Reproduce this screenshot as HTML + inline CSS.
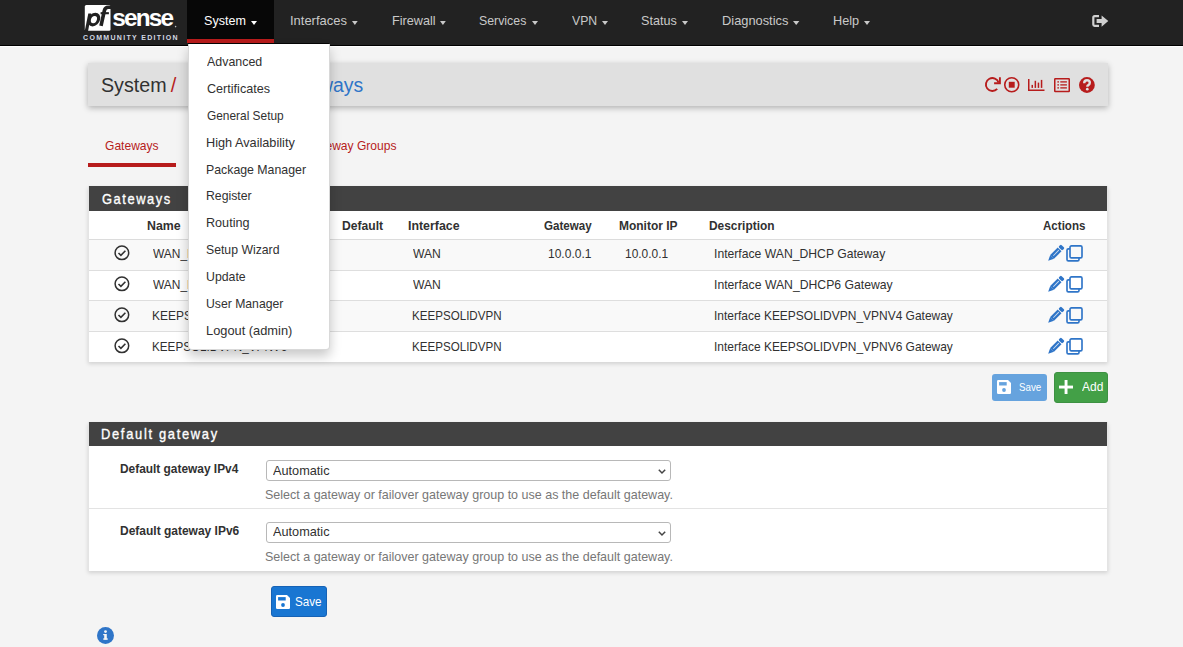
<!DOCTYPE html>
<html><head><meta charset="utf-8"><title>pfSense - System: Routing: Gateways</title>
<style>
html,body{margin:0;padding:0}
body{width:1183px;height:647px;overflow:hidden;position:relative;background:#f4f4f4;font-family:'Liberation Sans', sans-serif}
.t{position:absolute;white-space:pre;font-family:'Liberation Sans', sans-serif;transform-origin:0 0}
svg text{font-family:'Liberation Sans', sans-serif}
</style></head><body>
<div style="position:absolute;left:0px;top:0px;width:1183px;height:45px;background:#222222"></div>
<div style="position:absolute;left:0px;top:45px;width:1183px;height:1px;background:#000000"></div>
<div style="position:absolute;left:0px;top:46px;width:1183px;height:1px;background:#ffffff"></div>
<div style="position:absolute;left:187px;top:0px;width:87px;height:43px;background:#070707"></div>
<div style="position:absolute;left:188px;top:43px;width:141px;height:1px;background:#050505"></div>
<div style="position:absolute;left:187px;top:39px;width:87px;height:4px;background:#b71c1c"></div>
<div class="t" style="left:203.53px;top:13.70px;font-size:13px;line-height:13px;font-weight:400;letter-spacing:0.000px;color:#ffffff;transform:scaleX(0.9667)">System</div>
<div class="t" style="left:289.70px;top:13.70px;font-size:13px;line-height:13px;font-weight:400;letter-spacing:0.000px;color:#c9c9c9;transform:scaleX(0.9964)">Interfaces</div>
<div class="t" style="left:391.53px;top:13.70px;font-size:13px;line-height:13px;font-weight:400;letter-spacing:0.000px;color:#c9c9c9;transform:scaleX(0.9744)">Firewall</div>
<div class="t" style="left:479.05px;top:13.70px;font-size:13px;line-height:13px;font-weight:400;letter-spacing:0.000px;color:#c9c9c9;transform:scaleX(0.9490)">Services</div>
<div class="t" style="left:572.00px;top:13.70px;font-size:13px;line-height:13px;font-weight:400;letter-spacing:0.000px;color:#c9c9c9;transform:scaleX(0.9423)">VPN</div>
<div class="t" style="left:640.63px;top:13.70px;font-size:13px;line-height:13px;font-weight:400;letter-spacing:0.000px;color:#c9c9c9;transform:scaleX(0.9694)">Status</div>
<div class="t" style="left:721.81px;top:13.70px;font-size:13px;line-height:13px;font-weight:400;letter-spacing:0.000px;color:#c9c9c9;transform:scaleX(0.9879)">Diagnostics</div>
<div class="t" style="left:832.62px;top:13.70px;font-size:13px;line-height:13px;font-weight:400;letter-spacing:0.000px;color:#c9c9c9;transform:scaleX(0.9769)">Help</div>
<svg style="position:absolute;left:251px;top:20.5px;overflow:visible" width="6" height="4" viewBox="0 0 6 4"><polygon points="0,0 6,0 3.0,4" fill="#ffffff"/></svg>
<svg style="position:absolute;left:352.3px;top:20.5px;overflow:visible" width="5.699999999999989" height="4" viewBox="0 0 5.699999999999989 4"><polygon points="0,0 5.699999999999989,0 2.8499999999999943,4" fill="#c9c9c9"/></svg>
<svg style="position:absolute;left:440.2px;top:20.5px;overflow:visible" width="5.800000000000011" height="4" viewBox="0 0 5.800000000000011 4"><polygon points="0,0 5.800000000000011,0 2.9000000000000057,4" fill="#c9c9c9"/></svg>
<svg style="position:absolute;left:532px;top:20.5px;overflow:visible" width="6" height="4" viewBox="0 0 6 4"><polygon points="0,0 6,0 3.0,4" fill="#c9c9c9"/></svg>
<svg style="position:absolute;left:602px;top:20.5px;overflow:visible" width="6" height="4" viewBox="0 0 6 4"><polygon points="0,0 6,0 3.0,4" fill="#c9c9c9"/></svg>
<svg style="position:absolute;left:682px;top:20.5px;overflow:visible" width="6" height="4" viewBox="0 0 6 4"><polygon points="0,0 6,0 3.0,4" fill="#c9c9c9"/></svg>
<svg style="position:absolute;left:792.6px;top:20.5px;overflow:visible" width="6.399999999999977" height="4" viewBox="0 0 6.399999999999977 4"><polygon points="0,0 6.399999999999977,0 3.1999999999999886,4" fill="#c9c9c9"/></svg>
<svg style="position:absolute;left:864px;top:20.5px;overflow:visible" width="6" height="4" viewBox="0 0 6 4"><polygon points="0,0 6,0 3.0,4" fill="#c9c9c9"/></svg>
<svg style="position:absolute;left:80px;top:0px;overflow:visible" width="100" height="45" viewBox="0 0 100 45">
<path d="M6.3,5.1 H29 Q30.5,5.1 30.5,6.6 V29.3 Q30.5,30.8 29,30.8 H6.3 Q4.8,30.8 4.8,29.3 V6.6 Q4.8,5.1 6.3,5.1 Z" fill="#ffffff"/>
<ellipse cx="13.9" cy="19.6" rx="4.6" ry="5.2" transform="skewX(-12) translate(4.2 0)" fill="none" stroke="#212121" stroke-width="3.2"/>
<polygon points="8.3,13.6 11.3,13.6 8.0,31.2 4.7,31.2" fill="#212121"/>
<path d="M21.0,25.9 L24.4,10.5 Q25.2,7.3 28.2,7.3 L31,7.3" fill="none" stroke="#212121" stroke-width="3.6"/>
<path d="M20.6,13.2 H28.9" fill="none" stroke="#212121" stroke-width="2.1"/>
<text x="32.3" y="26.1" font-family="Liberation Sans" font-weight="700" font-size="24.4" letter-spacing="-1.85" fill="#ffffff">sense</text>
<circle cx="95.6" cy="26.6" r="0.8" fill="#bbbbbb"/>
<text x="3" y="40.1" font-family="Liberation Sans" font-weight="700" font-size="7" letter-spacing="1.32" fill="#d3d9e4">COMMUNITY EDITION</text>
</svg>
<svg style="position:absolute;left:1092px;top:14.8px;overflow:visible" width="17" height="12" viewBox="0 0 17 12"><path d="M7,1.2 H2.6 Q1.3,1.2 1.3,2.5 V9.6 Q1.3,10.9 2.6,10.9 H7" fill="none" stroke="#d0d0d0" stroke-width="2.2"/>
<path d="M4.6,4.1 H9.6 V0.4 L16.3,6.05 L9.6,11.7 V8 H4.6 Z" fill="#d0d0d0"/></svg>
<div style="position:absolute;left:88px;top:63px;width:1020px;height:43px;background:#e0e0e0;box-shadow:0 2px 6px rgba(0,0,0,.28)"></div>
<div class="t" style="left:100.52px;top:74.70px;font-size:20px;line-height:20px;font-weight:400;letter-spacing:0.000px;color:#313131;transform:scaleX(0.9831)">System</div>
<div class="t" style="left:170.80px;top:74.70px;font-size:20px;line-height:20px;font-weight:400;letter-spacing:1.000px;color:#b71c1c;transform:scaleX(1.0000)">/</div>
<div class="t" style="left:277.03px;top:74.70px;font-size:20px;line-height:20px;font-weight:400;letter-spacing:0.000px;color:#2f75c8;transform:scaleX(0.9693)">Gateways</div>
<svg style="position:absolute;left:984px;top:76.2px;overflow:visible" width="17" height="17" viewBox="0 0 17 17"><path d="M13.2,12.9 A6.5,6.5 0 1 1 14.6,6.6" fill="none" stroke="#b71c1c" stroke-width="1.9"/>
<polyline points="10.1,7.3 15.9,7.3 15.9,1.3" fill="none" stroke="#b71c1c" stroke-width="1.9"/></svg>
<svg style="position:absolute;left:1004px;top:77px;overflow:visible" width="15.7" height="15.5" viewBox="0 0 15.7 15.5"><circle cx="7.75" cy="7.75" r="7.0" fill="none" stroke="#b71c1c" stroke-width="1.6"/>
<rect x="4.8" y="4.8" width="5.9" height="5.9" fill="#b71c1c"/></svg>
<svg style="position:absolute;left:1028.3px;top:79.1px;overflow:visible" width="16.5" height="12" viewBox="0 0 16.5 12"><path d="M0.75,0 V11.25 H16.5" fill="none" stroke="#b71c1c" stroke-width="1.5"/>
<rect x="3.5" y="5.9" width="1.5" height="3.0" fill="#b71c1c"/>
<rect x="6.6" y="1.8" width="1.5" height="7.1" fill="#b71c1c"/>
<rect x="9.7" y="3.6" width="1.5" height="5.3" fill="#b71c1c"/>
<rect x="12.8" y="0.9" width="1.5" height="8.0" fill="#b71c1c"/></svg>
<svg style="position:absolute;left:1053.8px;top:78.2px;overflow:visible" width="16" height="14.2" viewBox="0 0 16 14.2"><rect x="0.75" y="0.75" width="14.5" height="12.7" rx="0.5" fill="none" stroke="#b71c1c" stroke-width="1.5"/>
<rect x="3.4" y="3.2" width="1.5" height="1.4" fill="#b71c1c"/><rect x="6.3" y="3.25" width="6.6" height="1.3" fill="#b71c1c"/>
<rect x="3.4" y="6.2" width="1.5" height="1.4" fill="#b71c1c"/><rect x="6.3" y="6.25" width="6.6" height="1.3" fill="#b71c1c"/>
<rect x="3.4" y="9.2" width="1.5" height="1.4" fill="#b71c1c"/><rect x="6.3" y="9.25" width="6.6" height="1.3" fill="#b71c1c"/></svg>
<svg style="position:absolute;left:1079px;top:77px;overflow:visible" width="16" height="16" viewBox="0 0 16 16"><circle cx="7.9" cy="8" r="7.9" fill="#b71c1c"/>
<path d="M5.2,6.3 Q5.2,3.3 8,3.3 Q10.8,3.3 10.8,5.8 Q10.8,7.3 9.3,8.1 Q8.3,8.6 8.3,9.7" fill="none" stroke="#e0e0e0" stroke-width="2.4"/>
<circle cx="8.3" cy="12.2" r="1.35" fill="#e0e0e0"/></svg>
<div class="t" style="left:104.80px;top:138.70px;font-size:13px;line-height:13px;font-weight:400;letter-spacing:0.000px;color:#b71c1c;transform:scaleX(0.9276)">Gateways</div>
<div class="t" style="left:306.00px;top:138.90px;font-size:13px;line-height:13px;font-weight:400;letter-spacing:0.000px;color:#b71c1c;transform:scaleX(0.9278)">Gateway Groups</div>
<div style="position:absolute;left:88px;top:163px;width:88px;height:4px;background:#b71c1c"></div>
<div style="position:absolute;left:88px;top:186px;width:1020px;height:176px;box-sizing:border-box;background:#fff;border-left:1px solid #e4e4e4;border-right:1px solid #e4e4e4;box-shadow:0 2px 4px rgba(0,0,0,.14)"></div>
<div style="position:absolute;left:89px;top:186px;width:1018px;height:25px;background:#424242"></div>
<div class="t" style="left:102.20px;top:190.60px;font-size:15px;line-height:15px;font-weight:400;letter-spacing:1.807px;color:#ffffff;transform:scaleX(0.8600);-webkit-text-stroke:0.35px #fff">Gateways</div>
<div style="position:absolute;left:89px;top:239px;width:1018px;height:1px;background:#dcdcdc"></div>
<div style="position:absolute;left:89px;top:240px;width:1018px;height:30px;background:#f9f9f9"></div>
<div style="position:absolute;left:89px;top:301px;width:1018px;height:30px;background:#f9f9f9"></div>
<div style="position:absolute;left:89px;top:270px;width:1018px;height:1px;background:#dedede"></div>
<div style="position:absolute;left:89px;top:300px;width:1018px;height:1px;background:#dedede"></div>
<div style="position:absolute;left:89px;top:331px;width:1018px;height:1px;background:#dedede"></div>
<div class="t" style="left:147.15px;top:218.80px;font-size:13px;line-height:13px;font-weight:700;letter-spacing:0.000px;color:#313131;transform:scaleX(0.9500)">Name</div>
<div class="t" style="left:342.27px;top:218.80px;font-size:13px;line-height:13px;font-weight:700;letter-spacing:0.000px;color:#313131;transform:scaleX(0.9326)">Default</div>
<div class="t" style="left:407.95px;top:218.80px;font-size:13px;line-height:13px;font-weight:700;letter-spacing:0.000px;color:#313131;transform:scaleX(0.9509)">Interface</div>
<div class="t" style="left:543.70px;top:218.80px;font-size:13px;line-height:13px;font-weight:700;letter-spacing:0.000px;color:#313131;transform:scaleX(0.8907)">Gateway</div>
<div class="t" style="left:619.08px;top:218.80px;font-size:13px;line-height:13px;font-weight:700;letter-spacing:0.000px;color:#313131;transform:scaleX(0.9206)">Monitor IP</div>
<div class="t" style="left:708.98px;top:218.80px;font-size:13px;line-height:13px;font-weight:700;letter-spacing:0.000px;color:#313131;transform:scaleX(0.9157)">Description</div>
<div class="t" style="left:1043.00px;top:218.80px;font-size:13px;line-height:13px;font-weight:700;letter-spacing:0.000px;color:#313131;transform:scaleX(0.8896)">Actions</div>
<svg style="position:absolute;left:114.3px;top:245.1px;overflow:visible" width="16" height="16" viewBox="0 0 16 16"><circle cx="7.9" cy="7.8" r="6.8" fill="none" stroke="#313131" stroke-width="1.5"/>
<polyline points="4.5,8.0 6.9,10.3 11.4,5.7" fill="none" stroke="#313131" stroke-width="1.6"/></svg>
<svg style="position:absolute;left:1046.6px;top:246.2px;overflow:visible" width="16" height="16" viewBox="0 0 16 16"><g transform="rotate(45 8 8)"><rect x="5.3" y="-3.0" width="5.4" height="3.6" rx="1.2" fill="#2f75c8"/>
<rect x="5.3" y="1.5" width="5.4" height="10.6" fill="#2f75c8"/><polygon points="5.3,12.1 10.7,12.1 8,17.6" fill="#2f75c8"/>
<rect x="7.55" y="2.6" width="0.9" height="7.8" fill="#f9f9f9" opacity=".8"/></g></svg>
<svg style="position:absolute;left:1066.2px;top:245.1px;overflow:visible" width="17" height="17" viewBox="0 0 17 17"><rect x="1.0" y="3.8" width="12.0" height="12.0" rx="1.4" fill="none" stroke="#2f75c8" stroke-width="1.65"/>
<rect x="4.0" y="0.8" width="12.0" height="12.0" rx="1.4" fill="#f9f9f9" stroke="#2f75c8" stroke-width="1.65"/></svg>
<svg style="position:absolute;left:114.3px;top:276.1px;overflow:visible" width="16" height="16" viewBox="0 0 16 16"><circle cx="7.9" cy="7.8" r="6.8" fill="none" stroke="#313131" stroke-width="1.5"/>
<polyline points="4.5,8.0 6.9,10.3 11.4,5.7" fill="none" stroke="#313131" stroke-width="1.6"/></svg>
<svg style="position:absolute;left:1046.6px;top:277.20000000000005px;overflow:visible" width="16" height="16" viewBox="0 0 16 16"><g transform="rotate(45 8 8)"><rect x="5.3" y="-3.0" width="5.4" height="3.6" rx="1.2" fill="#2f75c8"/>
<rect x="5.3" y="1.5" width="5.4" height="10.6" fill="#2f75c8"/><polygon points="5.3,12.1 10.7,12.1 8,17.6" fill="#2f75c8"/>
<rect x="7.55" y="2.6" width="0.9" height="7.8" fill="#ffffff" opacity=".8"/></g></svg>
<svg style="position:absolute;left:1066.2px;top:276.1px;overflow:visible" width="17" height="17" viewBox="0 0 17 17"><rect x="1.0" y="3.8" width="12.0" height="12.0" rx="1.4" fill="none" stroke="#2f75c8" stroke-width="1.65"/>
<rect x="4.0" y="0.8" width="12.0" height="12.0" rx="1.4" fill="#ffffff" stroke="#2f75c8" stroke-width="1.65"/></svg>
<svg style="position:absolute;left:114.3px;top:307.2px;overflow:visible" width="16" height="16" viewBox="0 0 16 16"><circle cx="7.9" cy="7.8" r="6.8" fill="none" stroke="#313131" stroke-width="1.5"/>
<polyline points="4.5,8.0 6.9,10.3 11.4,5.7" fill="none" stroke="#313131" stroke-width="1.6"/></svg>
<svg style="position:absolute;left:1046.6px;top:308.3px;overflow:visible" width="16" height="16" viewBox="0 0 16 16"><g transform="rotate(45 8 8)"><rect x="5.3" y="-3.0" width="5.4" height="3.6" rx="1.2" fill="#2f75c8"/>
<rect x="5.3" y="1.5" width="5.4" height="10.6" fill="#2f75c8"/><polygon points="5.3,12.1 10.7,12.1 8,17.6" fill="#2f75c8"/>
<rect x="7.55" y="2.6" width="0.9" height="7.8" fill="#f9f9f9" opacity=".8"/></g></svg>
<svg style="position:absolute;left:1066.2px;top:307.2px;overflow:visible" width="17" height="17" viewBox="0 0 17 17"><rect x="1.0" y="3.8" width="12.0" height="12.0" rx="1.4" fill="none" stroke="#2f75c8" stroke-width="1.65"/>
<rect x="4.0" y="0.8" width="12.0" height="12.0" rx="1.4" fill="#f9f9f9" stroke="#2f75c8" stroke-width="1.65"/></svg>
<svg style="position:absolute;left:114.3px;top:338.1px;overflow:visible" width="16" height="16" viewBox="0 0 16 16"><circle cx="7.9" cy="7.8" r="6.8" fill="none" stroke="#313131" stroke-width="1.5"/>
<polyline points="4.5,8.0 6.9,10.3 11.4,5.7" fill="none" stroke="#313131" stroke-width="1.6"/></svg>
<svg style="position:absolute;left:1046.6px;top:339.20000000000005px;overflow:visible" width="16" height="16" viewBox="0 0 16 16"><g transform="rotate(45 8 8)"><rect x="5.3" y="-3.0" width="5.4" height="3.6" rx="1.2" fill="#2f75c8"/>
<rect x="5.3" y="1.5" width="5.4" height="10.6" fill="#2f75c8"/><polygon points="5.3,12.1 10.7,12.1 8,17.6" fill="#2f75c8"/>
<rect x="7.55" y="2.6" width="0.9" height="7.8" fill="#ffffff" opacity=".8"/></g></svg>
<svg style="position:absolute;left:1066.2px;top:338.1px;overflow:visible" width="17" height="17" viewBox="0 0 17 17"><rect x="1.0" y="3.8" width="12.0" height="12.0" rx="1.4" fill="none" stroke="#2f75c8" stroke-width="1.65"/>
<rect x="4.0" y="0.8" width="12.0" height="12.0" rx="1.4" fill="#ffffff" stroke="#2f75c8" stroke-width="1.65"/></svg>
<div class="t" style="left:153.00px;top:247.00px;font-size:13px;line-height:13px;font-weight:400;letter-spacing:0.000px;color:#313131;transform:scaleX(0.9200)">WAN_DHCP</div>
<div class="t" style="left:413.20px;top:247.00px;font-size:13px;line-height:13px;font-weight:400;letter-spacing:0.000px;color:#313131;transform:scaleX(0.9345)">WAN</div>
<div class="t" style="left:548.08px;top:247.00px;font-size:13px;line-height:13px;font-weight:400;letter-spacing:0.000px;color:#313131;transform:scaleX(0.9239)">10.0.0.1</div>
<div class="t" style="left:624.68px;top:247.00px;font-size:13px;line-height:13px;font-weight:400;letter-spacing:0.000px;color:#313131;transform:scaleX(0.9174)">10.0.0.1</div>
<div class="t" style="left:713.56px;top:247.00px;font-size:13px;line-height:13px;font-weight:400;letter-spacing:0.000px;color:#313131;transform:scaleX(0.9368)">Interface WAN_DHCP Gateway</div>
<div class="t" style="left:153.00px;top:278.00px;font-size:13px;line-height:13px;font-weight:400;letter-spacing:0.000px;color:#313131;transform:scaleX(0.9200)">WAN_DHCP6</div>
<div class="t" style="left:413.20px;top:278.00px;font-size:13px;line-height:13px;font-weight:400;letter-spacing:0.000px;color:#313131;transform:scaleX(0.9345)">WAN</div>
<div class="t" style="left:713.56px;top:278.00px;font-size:13px;line-height:13px;font-weight:400;letter-spacing:0.000px;color:#313131;transform:scaleX(0.9392)">Interface WAN_DHCP6 Gateway</div>
<div class="t" style="left:152.08px;top:309.00px;font-size:13px;line-height:13px;font-weight:400;letter-spacing:0.000px;color:#313131;transform:scaleX(0.9200)">KEEPSOLIDVPN_VPNV4</div>
<div class="t" style="left:412.31px;top:309.00px;font-size:13px;line-height:13px;font-weight:400;letter-spacing:0.000px;color:#313131;transform:scaleX(0.8919)">KEEPSOLIDVPN</div>
<div class="t" style="left:713.58px;top:309.00px;font-size:13px;line-height:13px;font-weight:400;letter-spacing:0.000px;color:#313131;transform:scaleX(0.9208)">Interface KEEPSOLIDVPN_VPNV4 Gateway</div>
<div class="t" style="left:152.10px;top:340.00px;font-size:13px;line-height:13px;font-weight:400;letter-spacing:0.000px;color:#313131;transform:scaleX(0.8993)">KEEPSOLIDVPN_VPNV6</div>
<div class="t" style="left:412.31px;top:340.00px;font-size:13px;line-height:13px;font-weight:400;letter-spacing:0.000px;color:#313131;transform:scaleX(0.8919)">KEEPSOLIDVPN</div>
<div class="t" style="left:713.58px;top:340.00px;font-size:13px;line-height:13px;font-weight:400;letter-spacing:0.000px;color:#313131;transform:scaleX(0.9208)">Interface KEEPSOLIDVPN_VPNV6 Gateway</div>
<div style="position:absolute;left:992px;top:374px;width:55px;height:27px;background:#66a3de;border-radius:3px"></div>
<svg style="position:absolute;left:996.8px;top:380px;overflow:visible" width="14" height="14" viewBox="0 0 14 14"><path d="M1.2,0 H11 L14,3 V12.8 Q14,14 12.8,14 H1.2 Q0,14 0,12.8 V1.2 Q0,0 1.2,0 Z" fill="#ffffff"/>
<rect x="2.1" y="2.1" width="7.6" height="3.4" fill="#66a3de"/><circle cx="7" cy="10" r="1.9" fill="#66a3de"/></svg>
<div class="t" style="left:1019.40px;top:381.70px;font-size:11px;line-height:11px;font-weight:400;letter-spacing:0.000px;color:#ffffff;transform:scaleX(0.8880)">Save</div>
<div style="position:absolute;left:1054px;top:372px;width:54px;height:31px;box-sizing:border-box;background:#43a047;border:1px solid #3d9142;border-radius:3px"></div>
<svg style="position:absolute;left:1058.8px;top:379.9px;overflow:visible" width="14" height="14" viewBox="0 0 14 14"><rect x="5.6" y="0" width="2.9" height="14" fill="#fff"/><rect x="0" y="5.6" width="14" height="2.9" fill="#fff"/></svg>
<div class="t" style="left:1082.00px;top:379.70px;font-size:13px;line-height:13px;font-weight:400;letter-spacing:0.000px;color:#ffffff;transform:scaleX(0.9217)">Add</div>
<div style="position:absolute;left:88px;top:422px;width:1020px;height:149px;box-sizing:border-box;background:#fff;border-left:1px solid #e4e4e4;border-right:1px solid #e4e4e4;box-shadow:0 2px 4px rgba(0,0,0,.14)"></div>
<div style="position:absolute;left:89px;top:422px;width:1018px;height:24px;background:#424242"></div>
<div class="t" style="left:101.24px;top:425.90px;font-size:15px;line-height:15px;font-weight:400;letter-spacing:1.967px;color:#ffffff;transform:scaleX(0.8600);-webkit-text-stroke:0.35px #fff">Default gateway</div>
<div style="position:absolute;left:89px;top:508px;width:1018px;height:1px;background:#e3e3e3"></div>
<div class="t" style="left:119.59px;top:462.00px;font-size:13px;line-height:13px;font-weight:700;letter-spacing:0.000px;color:#313131;transform:scaleX(0.9147)">Default gateway IPv4</div>
<div class="t" style="left:119.58px;top:524.00px;font-size:13px;line-height:13px;font-weight:700;letter-spacing:0.000px;color:#313131;transform:scaleX(0.9219)">Default gateway IPv6</div>
<div style="position:absolute;left:266px;top:460px;width:405px;height:21px;box-sizing:border-box;border:1px solid #b8b8b8;border-radius:3px;background:#fff"></div>
<svg style="position:absolute;left:658px;top:468.7px;overflow:visible" width="8" height="5" viewBox="0 0 8 5"><polyline points="0.8,0.8 4,4 7.2,0.8" fill="none" stroke="#444" stroke-width="1.5"/></svg>
<div style="position:absolute;left:266px;top:522px;width:405px;height:21px;box-sizing:border-box;border:1px solid #b8b8b8;border-radius:3px;background:#fff"></div>
<svg style="position:absolute;left:658px;top:530.7px;overflow:visible" width="8" height="5" viewBox="0 0 8 5"><polyline points="0.8,0.8 4,4 7.2,0.8" fill="none" stroke="#444" stroke-width="1.5"/></svg>
<div class="t" style="left:272.70px;top:464.10px;font-size:13px;line-height:13px;font-weight:400;letter-spacing:0.000px;color:#313131;transform:scaleX(0.9776)">Automatic</div>
<div class="t" style="left:272.70px;top:525.40px;font-size:13px;line-height:13px;font-weight:400;letter-spacing:0.000px;color:#313131;transform:scaleX(0.9776)">Automatic</div>
<div class="t" style="left:265.04px;top:488.20px;font-size:13px;line-height:13px;font-weight:400;letter-spacing:0.000px;color:#777777;transform:scaleX(0.9621)">Select a gateway or failover gateway group to use as the default gateway.</div>
<div class="t" style="left:265.04px;top:550.00px;font-size:13px;line-height:13px;font-weight:400;letter-spacing:0.000px;color:#777777;transform:scaleX(0.9621)">Select a gateway or failover gateway group to use as the default gateway.</div>
<div style="position:absolute;left:271px;top:586px;width:56px;height:31px;box-sizing:border-box;background:#1976d2;border:1px solid #1662b5;border-radius:3px"></div>
<svg style="position:absolute;left:276px;top:595.3px;overflow:visible" width="14" height="14" viewBox="0 0 14 14"><path d="M1.2,0 H11 L14,3 V12.8 Q14,14 12.8,14 H1.2 Q0,14 0,12.8 V1.2 Q0,0 1.2,0 Z" fill="#ffffff"/>
<rect x="2.1" y="2.1" width="7.6" height="3.4" fill="#1976d2"/><circle cx="7" cy="10" r="1.9" fill="#1976d2"/></svg>
<div class="t" style="left:295.10px;top:595.20px;font-size:13px;line-height:13px;font-weight:400;letter-spacing:0.000px;color:#ffffff;transform:scaleX(0.8966)">Save</div>
<svg style="position:absolute;left:97.1px;top:627px;overflow:visible" width="17" height="17" viewBox="0 0 17 17"><circle cx="8.5" cy="8.5" r="8.5" fill="#2f75c8"/>
<rect x="7.2" y="7" width="2.6" height="5.6" fill="#f5f5f5"/><rect x="6.2" y="11.4" width="4.6" height="1.3" fill="#f5f5f5"/>
<rect x="6.2" y="7" width="2" height="1.2" fill="#f5f5f5"/><circle cx="8.5" cy="4.6" r="1.4" fill="#f5f5f5"/></svg>
<div style="position:absolute;left:187.6px;top:44px;width:142.4px;height:305.6px;box-sizing:border-box;background:#fff;border:1px solid rgba(0,0,0,.15);border-top:0;border-radius:0 0 4px 4px;box-shadow:0 6px 12px rgba(0,0,0,.22)"></div>
<div class="t" style="left:206.50px;top:54.90px;font-size:13px;line-height:13px;font-weight:400;letter-spacing:0.000px;color:#313131;transform:scaleX(0.9544)">Advanced</div>
<div class="t" style="left:206.50px;top:81.80px;font-size:13px;line-height:13px;font-weight:400;letter-spacing:0.000px;color:#313131;transform:scaleX(0.9692)">Certificates</div>
<div class="t" style="left:206.50px;top:108.70px;font-size:13px;line-height:13px;font-weight:400;letter-spacing:0.000px;color:#313131;transform:scaleX(0.9143)">General Setup</div>
<div class="t" style="left:205.52px;top:135.60px;font-size:13px;line-height:13px;font-weight:400;letter-spacing:0.000px;color:#313131;transform:scaleX(0.9778)">High Availability</div>
<div class="t" style="left:205.55px;top:162.50px;font-size:13px;line-height:13px;font-weight:400;letter-spacing:0.000px;color:#313131;transform:scaleX(0.9476)">Package Manager</div>
<div class="t" style="left:205.56px;top:189.40px;font-size:13px;line-height:13px;font-weight:400;letter-spacing:0.000px;color:#313131;transform:scaleX(0.9438)">Register</div>
<div class="t" style="left:205.53px;top:216.30px;font-size:13px;line-height:13px;font-weight:400;letter-spacing:0.000px;color:#313131;transform:scaleX(0.9698)">Routing</div>
<div class="t" style="left:205.56px;top:243.20px;font-size:13px;line-height:13px;font-weight:400;letter-spacing:0.000px;color:#313131;transform:scaleX(0.9416)">Setup Wizard</div>
<div class="t" style="left:205.55px;top:270.10px;font-size:13px;line-height:13px;font-weight:400;letter-spacing:0.000px;color:#313131;transform:scaleX(0.9463)">Update</div>
<div class="t" style="left:205.56px;top:297.00px;font-size:13px;line-height:13px;font-weight:400;letter-spacing:0.000px;color:#313131;transform:scaleX(0.9390)">User Manager</div>
<div class="t" style="left:205.51px;top:323.90px;font-size:13px;line-height:13px;font-weight:400;letter-spacing:0.000px;color:#313131;transform:scaleX(0.9872)">Logout (admin)</div>
</body></html>
